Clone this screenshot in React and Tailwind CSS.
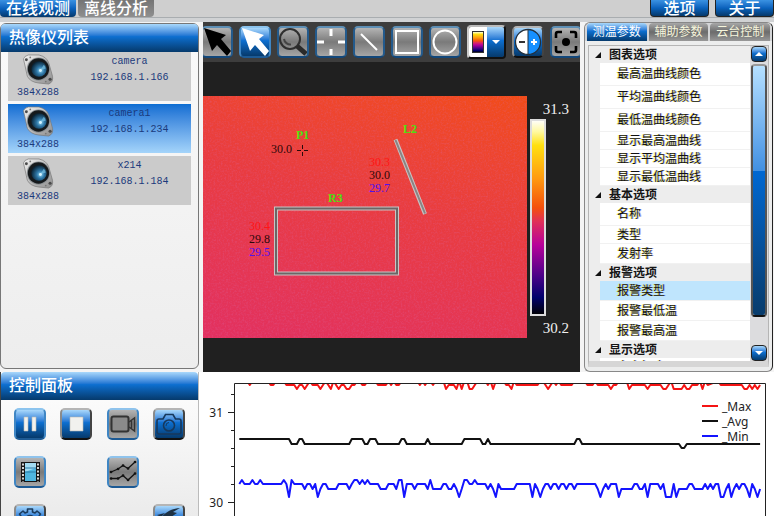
import React from "react";

const CJK = "font-['Liberation_Sans','Noto_Sans_CJK_SC',sans-serif]";
const BLUE = "bg-linear-to-b from-[#a9d8fb] via-[#0d6fd0] via-45% to-[#063a6c]";
const GRAY = "bg-linear-to-b from-[#b4b4b4] via-[#7a7a7a] via-50% to-[#a6a6a6]";

/* ---------- camera list ---------- */

function CameraIcon() {
  return (
    <svg viewBox="0 0 32 32" className="h-8 w-8" aria-hidden="true">
      <defs>
        <linearGradient id="plate" x1="0" y1="0" x2="1" y2="1">
          <stop offset="0" stopColor="#f2f2f2" />
          <stop offset="1" stopColor="#8d8d8d" />
        </linearGradient>
        <radialGradient id="lens" cx="0.6" cy="0.6" r="0.6">
          <stop offset="0" stopColor="#8fd6f2" />
          <stop offset="0.4" stopColor="#2f78a8" />
          <stop offset="1" stopColor="#0a2436" />
        </radialGradient>
      </defs>
      <path
        d="M1 5 Q2 2 6 1 L17 1 Q25 3 27 9 L31 23 Q32 29 27 31 L17 30 Q8 29 5 23 Z"
        fill="url(#plate)"
        stroke="#777"
        strokeWidth="0.7"
      />
      <circle cx="4" cy="6" r="1.5" fill="#4a4a4a" />
      <circle cx="8" cy="3.500" r="0.9" fill="#777" />
      <circle cx="28.500" cy="26" r="1.6" fill="#4a4a4a" />
      <circle cx="24" cy="28.500" r="0.9" fill="#777" />
      <circle cx="16.500" cy="15.500" r="12" fill="#8a8f92" />
      <circle cx="16.500" cy="15.500" r="11" fill="#15191c" />
      <circle cx="17" cy="15.500" r="8" fill="url(#lens)" />
      <path d="M18 17 L22 11 A7 7 0 0 1 24 15 Z" fill="#7cc5e6" opacity="0.7" />
      <circle cx="18.500" cy="17" r="1.500" fill="#d8f4ff" />
    </svg>
  );
}

const cameras = [
  { name: "camera", ip: "192.168.1.166", active: false },
  { name: "camera1", ip: "192.168.1.234", active: true },
  { name: "x214", ip: "192.168.1.184", active: false },
];

function CameraRow({ name, ip, active }) {
  return (
    <button
      type="button"
      className={`flex h-[49px] w-full text-[#1b3a7c] font-['Liberation_Mono',monospace] text-[10px] leading-4 ${
        active ? "bg-linear-to-b from-[#0a6dd2] to-[#a4d4fa]" : "bg-[#cbcbcb]"
      }`}
    >
      <span className="flex w-[60px] flex-col items-center pt-0.5">
        <CameraIcon />
        <span>384x288</span>
      </span>
      <span className="flex flex-1 flex-col items-center pt-0.5">
        <span>{name}</span>
        <span>{ip}</span>
      </span>
    </button>
  );
}

function PanelTitle({ children }) {
  return (
    <h2 className={`h-7 shrink-0 rounded-t-sm px-2 text-base leading-7 font-medium text-white ${BLUE}`}>
      {children}
    </h2>
  );
}

/* ---------- control panel ---------- */

function Tool({ label, look, children }) {
  const looks = {
    blue: `border-t-[#8cc4ee] border-x-[#3f86c4] border-b-[#1d5a94] ${BLUE}`,
    raised: `border-t-[#b5b5b5] border-l-[#8a8a8a] border-r-[#444] border-b-[#111] ${BLUE}`,
    gray: `border-t-[#8fc3ec] border-x-[#3f86c4] border-b-[#1d5a94] ${GRAY}`,
    dark: `border-t-[#5e8fb5] border-x-[#235a8c] border-b-[#12477a] ${GRAY}`,
  };
  return (
    <button
      type="button"
      aria-label={label}
      className={`flex h-8 w-8 shrink-0 items-center justify-center rounded-[5px] border-2 ${looks[look]}`}
    >
      {children}
    </button>
  );
}

function Icon({ children }) {
  return (
    <svg viewBox="0 0 28 28" className="h-7 w-7 shrink-0" fill="none" aria-hidden="true">
      {children}
    </svg>
  );
}

function ControlPanel() {
  return (
    <section className="flex min-h-0 flex-col overflow-hidden border-l border-r border-l-[#444] border-r-[#bbb] bg-linear-to-b from-white to-[#ebebeb]">
      <PanelTitle>控制面板</PanelTitle>
      <div className="grid grid-cols-[repeat(4,32px)] justify-between gap-y-4 px-[13px] pt-2">
        <Tool label="暂停" look="blue">
          <Icon>
            <path d="M8 7h4v14H8zM16 7h4v14h-4z" fill="#f1f1ee" stroke="#b9b9b4" strokeWidth="0.6" />
          </Icon>
        </Tool>
        <Tool label="停止" look="raised">
          <Icon>
            <path d="M8 7h13v14H8z" fill="#f1f1ee" stroke="#b9b9b4" strokeWidth="0.6" />
          </Icon>
        </Tool>
        <Tool label="录像" look="gray">
          <Icon>
            <rect x="2.500" y="6.500" width="17" height="15" rx="2" stroke="#333" strokeWidth="2" fill="#8a8a8a" />
            <path d="M20 12 L25.500 8 V21 L20 17 M22.500 10.500 V18.500" stroke="#333" strokeWidth="1.500" />
          </Icon>
        </Tool>
        <Tool label="拍照" look="raised">
          <Icon>
            <path
              d="M4 9 H8 L10.500 4.500 H18 L20.500 9 H24 Q26 9 26 11 V22 Q26 24 24 24 H4 Q2 24 2 22 V11 Q2 9 4 9 Z"
              stroke="#17385c"
              strokeWidth="1.600"
            />
            <circle cx="14" cy="15.500" r="5.500" stroke="#17385c" strokeWidth="1.600" />
            <path d="M11 16 A3.200 3.200 0 0 1 14 12.500" stroke="#17385c" />
          </Icon>
        </Tool>
        <Tool label="胶片" look="gray">
          <Icon>
            <rect x="5" y="4" width="19" height="20" fill="#161616" />
            <rect x="9" y="5" width="11" height="18" fill="#4fb6e0" />
            <path d="M9 5h11v5L9 14z" fill="#a3dcf2" />
            <path d="M9 14h11M9 10h11" stroke="#2a7ba6" />
            <path d="M7 5.500v18M22 5.500v18" stroke="#d6d6d6" strokeWidth="2" strokeDasharray="2 1.500" />
          </Icon>
        </Tool>
        <Tool label="曲线" look="gray">
          <Icon>
            <path
              d="M2 14 L9 11 L14 7.500 L19 10.500 L26 4 M2 20.500 H9 L14 17.500 L19 22 L26 15.500"
              stroke="#111"
              strokeWidth="1.300"
            />
            <path
              d="M2 14h.1M9 11h.1M14 7.500h.1M19 10.500h.1M26 4h.1M2 20.500h.1M9 20.500h.1M14 17.500h.1M19 22h.1M26 15.500h.1"
              stroke="#111"
              strokeWidth="2.600"
              strokeLinecap="round"
            />
          </Icon>
        </Tool>
        <Tool label="设置" look="raised">
          <Icon>
            <path
              d="M11.500 6 V3 H16.500 V6 L19 7 L21 5 L24.500 8 L22.500 11 L23.500 13 H26 V17 H2 V13 H4.500 L5.500 11 L3.500 8 L7 5 L9 7 Z"
              stroke="#1b3c5e"
              strokeWidth="1.600"
              strokeLinejoin="round"
            />
            <circle cx="14" cy="14" r="4.500" stroke="#1b3c5e" strokeWidth="1.600" />
          </Icon>
        </Tool>
        <Tool label="快速" look="raised">
          <Icon>
            <path d="M5 13 C9 8 14 3 25 2 L18 6 L22 7 L16 11 L17 20 L11 15 Z" fill="#1d3144" />
            <path d="M2 9 L10 7 L6 11 Z" fill="#1d3144" />
          </Icon>
        </Tool>
      </div>
    </section>
  );
}

/* keeps the row-two and row-three buttons in their grid columns */
const placement =
  "[&_button:nth-child(6)]:col-start-3 [&_button:nth-child(7)]:col-start-1 [&_button:nth-child(8)]:col-start-4";

/* ---------- thermal viewer ---------- */

function PaletteStops() {
  return (
    <linearGradient id="iron" x1="0" y1="0" x2="0" y2="1">
      <stop offset="0" stopColor="#fff" />
      <stop offset="0.060" stopColor="#fff9a0" />
      <stop offset="0.130" stopColor="#ffe010" />
      <stop offset="0.300" stopColor="#ff9a10" />
      <stop offset="0.450" stopColor="#f4500c" />
      <stop offset="0.520" stopColor="#e03058" />
      <stop offset="0.640" stopColor="#b8009a" />
      <stop offset="0.800" stopColor="#4a0088" />
      <stop offset="0.910" stopColor="#00006c" />
      <stop offset="1" stopColor="#000" />
    </linearGradient>
  );
}

function ViewerToolbar() {
  return (
    <div className="flex h-10 shrink-0 items-center justify-center gap-1.5 overflow-hidden bg-[#3d3d3d]">
      <Tool label="指针" look="dark">
        <Icon>
          <path d="M1 0 L23 7 L18 11 L28 23 L24 28 L14 17 L9 23 Z" fill="#000" />
        </Icon>
      </Tool>
      <Tool label="选择" look="blue">
        <Icon>
          <path d="M1 0 L23 7 L18 11 L28 23 L24 28 L14 17 L9 23 Z" fill="#fff" />
        </Icon>
      </Tool>
      <Tool label="放大" look="dark">
        <Icon>
          <circle cx="11" cy="11" r="10" stroke="#2f2f2f" strokeWidth="2" />
          <path d="M5 11 A6.500 6.500 0 0 0 12 16.500" stroke="#444" strokeWidth="2" />
          <path d="M18 18 L27 26" stroke="#2a2a2a" strokeWidth="5" />
        </Icon>
      </Tool>
      <Tool label="点" look="dark">
        <Icon>
          <path d="M14 1v7M14 21v6M0 14h7M21 14h7" stroke="#fff" strokeWidth="3" />
        </Icon>
      </Tool>
      <Tool label="直线" look="dark">
        <Icon>
          <path d="M6 6 L22 22" stroke="#fff" strokeWidth="2" />
        </Icon>
      </Tool>
      <Tool label="矩形" look="dark">
        <Icon>
          <rect x="3" y="3" width="22" height="22" stroke="#fff" strokeWidth="2" />
        </Icon>
      </Tool>
      <Tool label="圆形" look="dark">
        <Icon>
          <circle cx="14" cy="14" r="11.500" stroke="#fff" strokeWidth="2" />
        </Icon>
      </Tool>
      <button
        type="button"
        aria-label="调色板"
        className="flex h-[34px] w-[39px] shrink-0 overflow-hidden rounded-[4px] border-2 border-t-[#bbb] border-r-[#111] border-b-[#111] border-l-[#ccc]"
      >
        <span className="flex h-full w-[18px] items-center justify-center bg-white">
          <svg viewBox="0 0 12 22" className="h-[22px] w-3" aria-hidden="true">
            <defs>
              <PaletteStops />
            </defs>
            <rect x="0.500" y="0.500" width="11" height="21" fill="url(#iron)" stroke="#333" />
          </svg>
        </span>
        <span className={`flex h-full flex-1 items-center justify-center ${BLUE}`}>
          <svg viewBox="0 0 8 5" className="h-[5px] w-2" aria-hidden="true">
            <path d="M0 0h8L4 4z" fill="#fff" />
          </svg>
        </span>
      </button>
      <Tool label="对比度" look="raised">
        <Icon>
          <path d="M14 1.500 A12.500 12.500 0 0 0 14 26.500 Z" fill="#fff" />
          <path d="M14 1.500 A12.500 12.500 0 0 1 14 26.500 Z" fill="#1690ff" />
          <circle cx="14" cy="14" r="12.500" stroke="#24303c" strokeWidth="1.300" />
          <path d="M14 1.500v25" stroke="#24303c" />
          <path d="M5 14h6" stroke="#333" strokeWidth="2" />
          <path d="M17 14h6M20 11v6" stroke="#fff" strokeWidth="2" />
        </Icon>
      </Tool>
      <Tool label="对焦" look="dark">
        <Icon>
          <path
            d="M4 10 V6 Q4 4 6 4 H10 M18 4 H22 Q24 4 24 6 V10 M24 18 V22 Q24 24 22 24 H18 M10 24 H6 Q4 24 4 22 V18"
            stroke="#000"
            strokeWidth="2.600"
          />
          <circle cx="14" cy="14" r="4" fill="#000" />
        </Icon>
      </Tool>
    </div>
  );
}

function Reading({ place, lines }) {
  return (
    <div className={`absolute flex flex-col ${place}`}>
      {lines.map(([color, text]) => (
        <span key={text} className={color}>
          {text}
        </span>
      ))}
    </div>
  );
}

function Viewer() {
  return (
    <section className="flex min-h-0 min-w-0 flex-col bg-[#202020]">
      <ViewerToolbar />
      <div className="flex min-h-0 flex-1 py-[34px] font-['Liberation_Serif',serif]">
        <div className="relative min-w-0 flex-1 overflow-hidden bg-linear-195 from-[#f24c16] via-[#e93c40] via-45% to-[#e23060] text-xs leading-[13px]">
          <svg className="absolute inset-0 h-full w-full" aria-hidden="true">
            <filter id="grain">
              <feTurbulence type="fractalNoise" baseFrequency="0.550" numOctaves="2" seed="4" />
              <feColorMatrix values="0 0 0 0 0.700  0 0 0 0 0.150  0 0 0 0 0.400  1.400 0 0 0 -0.600" />
            </filter>
            <rect width="100%" height="100%" filter="url(#grain)" opacity="0.450" />
            <g fill="none">
              <rect x="73" y="112.500" width="121" height="65" stroke="#c9c4c4" strokeWidth="4" />
              <rect x="73" y="112.500" width="121" height="65" stroke="#6d6666" strokeWidth="2" />
              <path d="M192.500 43.500 L222 118" stroke="#c9c4c4" strokeWidth="4" />
              <path d="M192.500 44 L222 117.500" stroke="#8a8484" strokeWidth="2" />
              <path d="M94 54.500h4M101 54.500h4M99.500 49v4M99.500 56v4" stroke="#2a0a0a" />
            </g>
          </svg>
          <Reading place="left-[93px] top-[33px] font-bold text-[#4be010]" lines={[["", "P1"]]} />
          <Reading place="left-[68px] top-[47px] text-[#2c0808]" lines={[["", "30.0"]]} />
          <Reading place="left-[200px] top-[27px] font-bold text-[#4be010]" lines={[["", "L2"]]} />
          <Reading
            place="left-[166px] top-[60px]"
            lines={[
              ["text-[#ff1414]", "30.3"],
              ["text-[#2c0808]", "30.0"],
              ["text-[#5010f0]", "29.7"],
            ]}
          />
          <Reading place="left-[125px] top-[96px] font-bold text-[#4be010]" lines={[["", "R3"]]} />
          <Reading
            place="left-[46px] top-[124px]"
            lines={[
              ["text-[#ff1414]", "30.4"],
              ["text-[#2c0808]", "29.8"],
              ["text-[#5010f0]", "29.5"],
            ]}
          />
        </div>
        <div className="flex w-[53px] shrink-0 flex-col items-end px-[11px] text-[15px] leading-5 text-[#f0f0f0]">
          <span className="pt-[3px]">31.3</span>
          <svg
            viewBox="0 0 16 196"
            preserveAspectRatio="none"
            className="mr-[23px] min-h-0 w-4 flex-1"
            aria-hidden="true"
          >
            <rect x="1" y="1" width="14" height="194" fill="url(#iron)" stroke="#ddd" strokeWidth="2" />
          </svg>
          <span className="pt-0.5">30.2</span>
        </div>
      </div>
    </section>
  );
}

/* ---------- options tree ---------- */

const groups = [
  {
    title: "图表选项",
    items: [
      ["最高温曲线颜色", "h-[23px]"],
      ["平均温曲线颜色", "h-[23px]"],
      ["最低温曲线颜色", "h-[23px]"],
      ["显示最高温曲线", "h-[18px]"],
      ["显示平均温曲线", "h-[18px]"],
      ["显示最低温曲线", "h-[18px]"],
    ],
  },
  {
    title: "基本选项",
    items: [
      ["名称", "h-[23px]"],
      ["类型", "h-[18px]"],
      ["发射率", "h-5"],
    ],
  },
  {
    title: "报警选项",
    items: [
      ["报警类型", "h-5", true],
      ["报警最低温", "h-5"],
      ["报警最高温", "h-5"],
    ],
  },
  { title: "显示选项", items: [["文字加底", "h-[18px]"]] },
];

function ScrollButton({ up }) {
  return (
    <button
      type="button"
      aria-label={up ? "向上滚动" : "向下滚动"}
      className={`flex h-4 w-full shrink-0 items-center justify-center rounded-sm border border-[#222] ${BLUE}`}
    >
      <svg viewBox="0 0 8 4" className="h-1 w-2" aria-hidden="true">
        <path d={up ? "M0 4h8L4 0z" : "M0 0h8L4 4z"} fill="#fff" />
      </svg>
    </button>
  );
}

function Options() {
  return (
    <section className="mr-px flex min-h-0 flex-col rounded-md border border-[#888] border-r-[#222] bg-[#eceded] text-xs">
      <div className="flex h-[18px] shrink-0 gap-0.5 rounded-t-md bg-[#d4d5d7] px-0.5">
        {["测温参数", "辅助参数", "云台控制"].map((tab, i) => (
          <button
            key={tab}
            type="button"
            className={`flex-1 rounded-t-sm leading-[18px] whitespace-nowrap ${
              i === 0 ? `text-white ${BLUE}` : "bg-linear-to-b from-[#a8a8a8] via-[#6c6c6c] to-[#989898] text-[#f6f6dc]"
            }`}
          >
            {tab}
          </button>
        ))}
      </div>
      <div className="mx-[3px] mt-1 mb-1 flex min-h-0 flex-1 border border-[#b5b5b5] border-b-[6px] border-b-[#d6d6d6] bg-[#ededed]">
        <div className="min-w-0 flex-1 overflow-hidden">
          {groups.map((group) => (
            <div key={group.title}>
              <h3 className="flex h-[17px] items-center gap-2 pl-1.5 leading-none font-bold text-[#161616]">
                <svg viewBox="0 0 6 6" className="h-1.5 w-1.5" aria-hidden="true">
                  <path d="M6 0v6H0z" fill="#111" />
                </svg>
                {group.title}
              </h3>
              <ul className="pl-[11px]">
                {group.items.map(([text, height, selected]) => (
                  <li
                    key={text}
                    className={`flex items-center border-b border-[#f1f1f1] pl-[17px] leading-none whitespace-nowrap text-[#111] [text-shadow:-1px_0_#ffff30b0,1px_0_#4040ff70] ${height} ${
                      selected ? "bg-[#bfe5fd]" : "bg-white"
                    }`}
                  >
                    {text}
                  </li>
                ))}
              </ul>
            </div>
          ))}
        </div>
        <div className="flex w-[18px] shrink-0 flex-col bg-[#dcdcde] px-px">
          <ScrollButton up />
          <div className="mt-0.5 mb-7 flex flex-1 flex-col overflow-hidden rounded-sm border-2 border-x-[#555] border-t-[#999] border-b-[#111]">
            <div className="flex-[42] bg-linear-to-b from-[#b5e0ff] to-[#4190e2]" />
            <div className="flex-[58] bg-linear-to-b from-[#0068d2] to-[#083c6c]" />
          </div>
          <ScrollButton />
        </div>
      </div>
    </section>
  );
}

/* ---------- trend chart ---------- */

// Each series is a list of "sample index + level letter" break points.
const series = {
  max: {
    color: "#f51414",
    levels: { t: 381, e: 385, f: 389 },
    data: "0t 3t 4e 5t 11t 12e 13e 14t 17t 18e 21e 22f 23e 24e 25f 26e 27t 28e 30e 31f 32e 33t 34e 35f 36t 37e 38f 39e 40e 41f 42f 43e 44e 45t 46t 47e 48e 49t 52t 53e 56e 57t 58e 59t 60e 61e 62t 68t 69e 70t 71e 72t 73t 74e 75t 78t 79f 80e 82e 83f 84t 85f 86t 87t 88f 89f 90e 91t 94t 95e 96t 97f 98t 101t 102e 103e 104f 105t 106e 114e 115t 116t 117e 118f 119e 120t 121e 122t 123e 127e 128t 132t 133e 135e 136t 137e 141e 142f 143e 144e 145t 148t 149f 150e 155e 156f 157e 161e 162f 163f 164e 165t 166f 169f 170e 171f 172f 173e 175e 176t 177f 178t 179e 183t 184e 192e 193f 194f 195e 196f 197e 198f 199e",
  },
  avg: {
    color: "#111",
    levels: { h: 439, l: 444, v: 448 },
    data: "0h 19h 20l 22l 23h 24h 25l 42l 43h 47h 48l 49l 50h 52h 53l 61l 62h 63h 64l 71l 72h 73l 85l 86h 92h 93l 94l 95h 96l 128l 129h 130h 131l 168l 169v 170v 171l 199l",
  },
  min: {
    color: "#1414ff",
    levels: { a: 480, b: 484, c: 489, d: 497 },
    data: "0b 1a 2b 4b 5a 6b 7b 8a 9b 16b 17a 18b 19d 20a 21b 24b 25c 26b 27b 28c 29b 30d 31c 32b 33b 34c 37c 38b 41b 42c 43b 44a 45a 46b 47a 48b 49a 50b 53b 54c 56c 57b 59b 60c 61a 62a 63d 64b 66b 67c 68b 71b 72c 73a 74c 77c 78b 79b 80c 81c 82b 83c 84d 85c 86a 87a 88b 89b 90a 91b 94b 95c 96b 97c 98d 99b 100c 105c 106b 111b 112d 113b 114c 115d 116c 117b 118b 119c 120b 121b 122c 123b 124b 125c 126b 127b 128c 129b 136b 137c 138d 139c 140b 141c 142b 144b 145d 146c 150c 151b 152b 153c 154c 155b 156d 157b 160b 161c 162b 163d 165d 166b 167d 168c 171c 172b 173b 174c 177c 178b 179c 180b 181c 182b 183b 184d 185d 186c 187b 188d 189c 190b 191c 192b 193b 194c 195d 196b 197c 198d 199c",
  },
};

function toPoints({ levels, data }) {
  return data
    .split(" ")
    .map((p) => `${(239.3 + 2.617 * parseInt(p, 10)).toFixed(1)},${levels[p.at(-1)]}`)
    .join(" ");
}

const legend = [
  ["_Max", "#f51414", 406],
  ["_Avg", "#111", 421],
  ["_Min", "#1414ff", 436],
];

function Chart() {
  return (
    <section className="col-span-2 min-h-0 min-w-0 bg-white">
      <svg
        viewBox="203 372 571 144"
        className="h-full w-full font-['Noto_Sans','Open_Sans',sans-serif]"
        role="img"
        aria-label="温度曲线"
      >
        <defs>
          <clipPath id="plot">
            <rect x="235" y="384" width="530" height="140" />
          </clipPath>
        </defs>
        <g fill="none" strokeWidth="2" strokeLinejoin="round" clipPath="url(#plot)">
          {Object.entries(series).map(([name, s]) => (
            <polyline key={name} points={toPoints(s)} stroke={s.color} />
          ))}
        </g>
        <path d="M234.500 520 V383.500 H765.500 V520" fill="none" stroke="#222" />
        <path
          d="M228 412.500h6M228 502.500h6M231 394.500h3M231 430.500h3M231 448.500h3M231 466.500h3M231 484.500h3"
          stroke="#222"
        />
        <g fontSize="12" fill="#222">
          <text x="223" y="417" textAnchor="end">31</text>
          <text x="223" y="507" textAnchor="end">30</text>
          {legend.map(([name, color, y]) => (
            <g key={name}>
              <path d={`M702 ${y}h16`} stroke={color} strokeWidth="2" />
              <text x="722" y={y + 5}>{name}</text>
            </g>
          ))}
        </g>
      </svg>
    </section>
  );
}

/* ---------- page ---------- */

function HeaderButton({ blue, children }) {
  return (
    <button
      type="button"
      className={`h-[17px] rounded-b-sm px-1.5 text-base leading-[15px] font-medium whitespace-nowrap text-white ${
        blue
          ? "bg-linear-to-b from-[#3a92e2] via-[#0a62bd] to-[#06396b]"
          : "bg-linear-to-b from-[#757575] to-[#8f8f8f]"
      }`}
    >
      {children}
    </button>
  );
}

export default function App() {
  return (
    <div className={`flex h-screen flex-col overflow-hidden bg-[#f4f4f4] ${CJK}`}>
      <header className="flex h-[22px] shrink-0 items-start justify-between bg-[#d0d2d4]">
        <div className="flex h-[18px] w-full justify-between border-b border-[#a9adb0] bg-[#cfcfcf]">
          <nav className="flex gap-0.5">
            <HeaderButton blue>在线观测</HeaderButton>
            <HeaderButton>离线分析</HeaderButton>
          </nav>
          <div className="flex gap-1.5 [&_button]:w-[59px] [&_button]:border-x [&_button]:border-b [&_button]:border-[#222]">
            <HeaderButton blue>选项</HeaderButton>
            <HeaderButton blue>关于</HeaderButton>
          </div>
        </div>
      </header>
      <main
        className={`grid min-h-0 flex-1 grid-cols-[199px_minmax(0,1fr)_190px] grid-rows-[minmax(0,1fr)_144px] ${placement}`}
      >
        <section className="mt-px mb-[3px] flex min-h-0 flex-col rounded-md border border-[#777] bg-linear-to-b from-[#fafafa] to-[#ededed]">
          <PanelTitle>热像仪列表</PanelTitle>
          <div className="flex flex-col gap-[3px] px-[7px]">
            {cameras.map((camera) => (
              <CameraRow key={camera.name} {...camera} />
            ))}
          </div>
        </section>
        <div className="grid min-h-0 min-w-0 grid-cols-1 px-1">
          <Viewer />
        </div>
        <Options />
        <ControlPanel />
        <div className="col-span-2 grid min-h-0 bg-white pl-1">
          <Chart />
        </div>
      </main>
    </div>
  );
}
